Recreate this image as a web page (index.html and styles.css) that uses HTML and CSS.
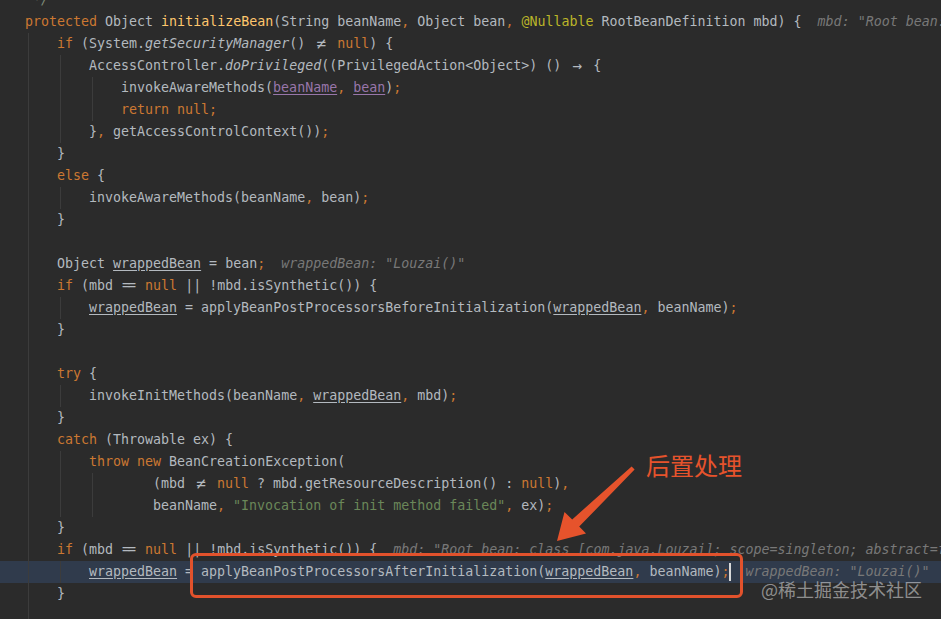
FILE: index.html
```html
<html>
	<head>
		<title>initializeBean</title>
		<link rel="stylesheet" href="styles.css">
	</head>
	<body>
		<div class="shot">
			<div class="editor">
				<div class="ln"><span class="doc"> */</span></div>
				<div class="ln"><span class="kw">protected</span> Object <span class="fn">initializeBean</span>(String beanName<span class="pn">,</span> Object bean<span class="pn">,</span> <span class="an">@Nullable</span> RootBeanDefinition mbd) {<span class="hint">mbd: "Root bean: class [com.java.Louzai]; scope=singleton; abstract=false; lazyInit=null"</span></div>
				<div class="ln"><span class="g"></span><span class="kw">if</span> (System.<span class="it">getSecurityManager</span>() <span class="lig">≠</span> <span class="kw">null</span>) {</div>
				<div class="ln"><span class="g"></span><span class="g"></span>AccessController.<span class="it">doPrivileged</span>((PrivilegedAction&lt;Object&gt;) () <span class="lig">→</span> {</div>
				<div class="ln"><span class="g"></span><span class="g"></span><span class="g"></span>invokeAwareMethods(<span class="pa">beanName</span><span class="pn">,</span> <span class="pa">bean</span>)<span class="pn">;</span></div>
				<div class="ln"><span class="g"></span><span class="g"></span><span class="g"></span><span class="kw">return null</span><span class="pn">;</span></div>
				<div class="ln"><span class="g"></span><span class="g"></span>}<span class="pn">,</span> getAccessControlContext())<span class="pn">;</span></div>
				<div class="ln"><span class="g"></span>}</div>
				<div class="ln"><span class="g"></span><span class="kw">else</span> {</div>
				<div class="ln"><span class="g"></span><span class="g"></span>invokeAwareMethods(beanName<span class="pn">,</span> bean)<span class="pn">;</span></div>
				<div class="ln"><span class="g"></span>}</div>
				<div class="ln"><span class="g"></span></div>
				<div class="ln"><span class="g"></span>Object <span class="ul">wrappedBean</span> = bean<span class="pn">;</span><span class="hint">wrappedBean: "Louzai()"</span></div>
				<div class="ln"><span class="g"></span><span class="kw">if</span> (mbd <span class="eq">==</span> <span class="kw">null</span> || !mbd.isSynthetic()) {</div>
				<div class="ln"><span class="g"></span><span class="g"></span><span class="ul">wrappedBean</span> = applyBeanPostProcessorsBeforeInitialization(<span class="ul">wrappedBean</span><span class="pn">,</span> beanName)<span class="pn">;</span></div>
				<div class="ln"><span class="g"></span>}</div>
				<div class="ln"><span class="g"></span></div>
				<div class="ln"><span class="g"></span><span class="kw">try</span> {</div>
				<div class="ln"><span class="g"></span><span class="g"></span>invokeInitMethods(beanName<span class="pn">,</span> <span class="ul">wrappedBean</span><span class="pn">,</span> mbd)<span class="pn">;</span></div>
				<div class="ln"><span class="g"></span>}</div>
				<div class="ln"><span class="g"></span><span class="kw">catch</span> (Throwable ex) {</div>
				<div class="ln"><span class="g"></span><span class="g"></span><span class="kw">throw new</span> BeanCreationException(</div>
				<div class="ln"><span class="g"></span><span class="g"></span><span class="g"></span><span class="s"></span>(mbd <span class="lig">≠</span> <span class="kw">null</span> ? mbd.getResourceDescription() : <span class="kw">null</span>)<span class="pn">,</span></div>
				<div class="ln"><span class="g"></span><span class="g"></span><span class="g"></span><span class="s"></span>beanName<span class="pn">,</span> <span class="st">"Invocation of init method failed"</span><span class="pn">,</span> ex)<span class="pn">;</span></div>
				<div class="ln"><span class="g"></span>}</div>
				<div class="ln"><span class="g"></span><span class="kw">if</span> (mbd <span class="eq">==</span> <span class="kw">null</span> || !mbd.isSynthetic()) {<span class="hint">mbd: "Root bean: class [com.java.Louzai]; scope=singleton; abstract=false; lazyInit=null"</span></div>
				<div class="ln cur"><span class="g"></span><span class="g"></span><span class="ul">wrappedBean</span> = applyBeanPostProcessorsAfterInitialization(<span class="ul">wrappedBean</span><span class="pn">,</span> beanName)<span class="pn">;</span><span class="caret"></span><span class="hint hint-after">wrappedBean: "Louzai()"</span></div>
				<div class="ln"><span class="g"></span>}</div>
				<div class="ln"><span class="g"></span></div>
			</div>

			<div class="mark-box"></div>
			<svg class="arrow" viewBox="0 0 941 619">
				<polygon points="631.6,466.6 634.6,469.6 579.2,526.6 586,533.5 557,541 564.5,512 572.2,519.4" fill="#e6532c"/>
			</svg>
			<div class="note">后置处理</div>
			<div class="watermark">@稀土掘金技术社区</div>
		</div>
	</body>
</html>
```

FILE: styles.css
```css
body {
	margin: 0px;
	background-color: #2b2b2b;
	overflow: hidden;
}
.shot {
	position: relative;
	height: 619px;
	overflow: hidden;
}
.editor {
	margin-top: -11px;
	font-family: "DejaVu Sans Mono", "Liberation Mono", monospace;
	font-size: 13.3px;
	line-height: 22px;
	color: #b3b9bf;
}
.ln {
	height: 22px;
	padding-left: 25px;
	white-space: pre;
	overflow: hidden;
}
.ln.cur {
	background-color: #303b4c;
}

/* indent cells, one per 4 columns */
.g, .s {
	display: inline-block;
	width: 32px;
	height: 22px;
	vertical-align: top;
}
.g {
	background: linear-gradient(#3c3c3c, #3c3c3c) no-repeat 3px 0 / 1px 100%;
}

.kw { color: #cc7832; }
.pn { color: #cc7832; }
.fn { color: #ffc66d; }
.an { color: #bbb529; }
.st { color: #6a8759; }
.doc { color: #7d8a77; font-style: italic; }
.it { font-style: italic; }
.pa {
	color: #9876aa;
	text-decoration: underline;
	text-underline-offset: 2px;
}
.ul {
	text-decoration: underline;
	text-underline-offset: 2px;
}
.lig {
	display: inline-block;
	width: 16px;
	text-align: center;
	font-size: 16px;
	line-height: 22px;
	vertical-align: top;
}
.eq {
	letter-spacing: -2px;
	padding: 0 3px 0 1px;
}
.hint {
	margin-left: 16px;
	color: #787878;
	font-style: italic;
}
.hint-after {
	margin-left: 14px;
}
.caret {
	display: inline-block;
	width: 0px;
	height: 18px;
	border-left: 2px solid #d8d8d8;
	vertical-align: middle;
}

/* annotations drawn over the screenshot */
.mark-box {
	position: absolute;
	left: 190px;
	top: 553px;
	width: 553px;
	height: 45px;
	box-sizing: border-box;
	border: 3px solid #e2522c;
	border-radius: 6px;
}
.arrow {
	position: absolute;
	left: 0px;
	top: 0px;
	width: 941px;
	height: 619px;
}
.note {
	position: absolute;
	left: 646px;
	top: 452px;
	font-family: "Noto Sans CJK SC", sans-serif;
	font-size: 24px;
	line-height: 26px;
	color: #e6532c;
}
.watermark {
	position: absolute;
	left: 761px;
	top: 578px;
	font-family: "Noto Sans CJK SC", sans-serif;
	font-size: 18px;
	line-height: 22px;
	color: rgba(255, 255, 255, 0.48);
}
```
